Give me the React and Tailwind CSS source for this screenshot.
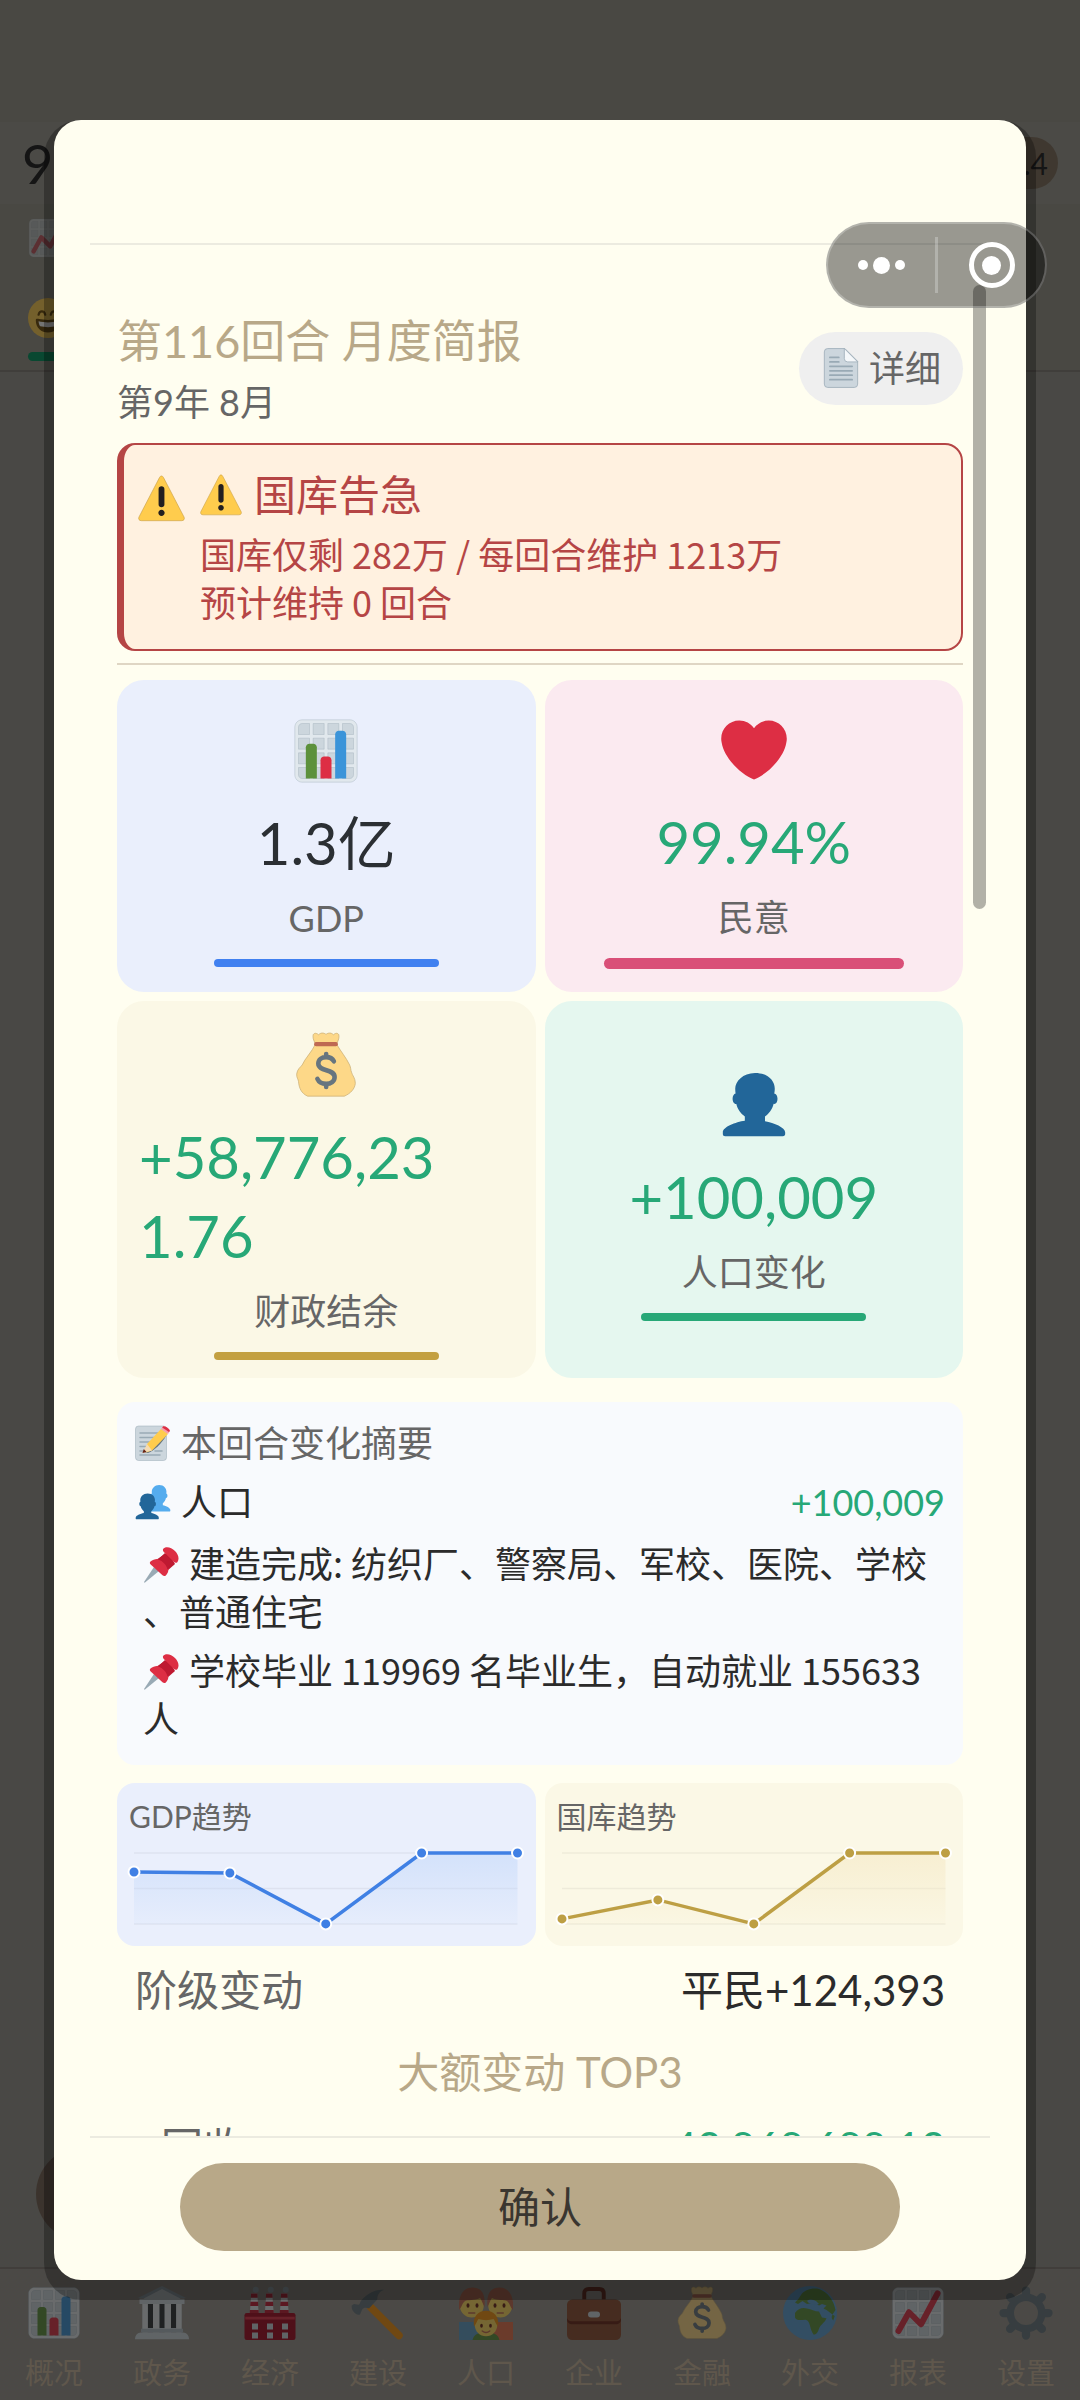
import React from 'react';
import clsx from 'clsx';

// 36x36 emoji drawings
const emojis = {
    barChart: (
        <>
            <path fill="#CCD6DD" d="M31 2H5C3.343 2 2 3.343 2 5v26c0 1.657 1.343 3 3 3h26c1.657 0 3-1.343 3-3V5c0-1.657-1.343-3-3-3z" />
            <path fill="#E1E8ED" stroke="#99AAB5" strokeWidth=".2" d="M31 1H5C2.791 1 1 2.791 1 5v26c0 2.209 1.791 4 4 4h26c2.209 0 4-1.791 4-4V5c0-2.209-1.791-4-4-4zm0 2c1.103 0 2 .897 2 2v4h-6V3h4zm-4 16h6v6h-6v-6zm0-2v-6h6v6h-6zM25 3v6h-6V3h6zm-6 8h6v6h-6v-6zm0 8h6v6h-6v-6zM17 3v6h-6V3h6zm-6 8h6v6h-6v-6zm0 8h6v6h-6v-6zM3 5c0-1.103.897-2 2-2h4v6H3V5zm0 6h6v6H3v-6zm0 8h6v6H3v-6zm2 14c-1.103 0-2-.897-2-2v-4h6v6H5zm6 0v-6h6v6h-6zm8 0v-6h6v6h-6zm12 0h-4v-6h6v4c0 1.103-.897 2-2 2z" />
            <path fill="#5C913B" d="M13 33H7V16c0-1.104.896-2 2-2h2c1.104 0 2 .896 2 2v17z" />
            <path fill="#3B94D9" d="M29 33h-6V9c0-1.104.896-2 2-2h2c1.104 0 2 .896 2 2v24z" />
            <path fill="#DD2E44" d="M21 33h-6V23c0-1.104.896-2 2-2h2c1.104 0 2 .896 2 2v10z" />
        </>
    ),
    trendUp: (
        <>
            <path fill="#CCD6DD" d="M31 2H5C3.343 2 2 3.343 2 5v26c0 1.657 1.343 3 3 3h26c1.657 0 3-1.343 3-3V5c0-1.657-1.343-3-3-3z" />
            <path fill="#E1E8ED" stroke="#99AAB5" strokeWidth=".2" d="M31 1H5C2.791 1 1 2.791 1 5v26c0 2.209 1.791 4 4 4h26c2.209 0 4-1.791 4-4V5c0-2.209-1.791-4-4-4zm0 2c1.103 0 2 .897 2 2v4h-6V3h4zm-4 16h6v6h-6v-6zm0-2v-6h6v6h-6zM25 3v6h-6V3h6zm-6 8h6v6h-6v-6zm0 8h6v6h-6v-6zM17 3v6h-6V3h6zm-6 8h6v6h-6v-6zm0 8h6v6h-6v-6zM3 5c0-1.103.897-2 2-2h4v6H3V5zm0 6h6v6H3v-6zm0 8h6v6H3v-6zm2 14c-1.103 0-2-.897-2-2v-4h6v6H5zm6 0v-6h6v6h-6zm8 0v-6h6v6h-6zm12 0h-4v-6h6v4c0 1.103-.897 2-2 2z" />
            <path fill="none" stroke="#DD2E44" strokeWidth="4" strokeLinecap="round" strokeLinejoin="round" d="M5 30l7-12.500 8 8L31 5" />
        </>
    ),
    heart: (
        <path fill="#DD2E44" d="M35.885 11.833c0-5.45-4.418-9.868-9.867-9.868-3.308 0-6.227 1.633-8.018 4.129-1.791-2.496-4.71-4.129-8.017-4.129-5.45 0-9.868 4.417-9.868 9.868 0 .772.098 1.52.266 2.241C1.751 22.587 11.216 31.568 18 34.034c6.783-2.466 16.249-11.447 17.617-19.959.17-.721.268-1.469.268-2.242z" />
    ),
    warning: (
        <>
            <path fill="#FFCC4D" stroke="#C9A24A" strokeWidth=".5" d="M2.653 35C.811 35-.001 33.662.847 32.027L16.456 1.972c.849-1.635 2.238-1.635 3.087 0l15.609 30.056c.85 1.634.037 2.972-1.805 2.972H2.653z" />
            <path fill="#231F20" d="M15.583 28.953c0-1.333 1.085-2.418 2.419-2.418 1.333 0 2.418 1.085 2.418 2.418 0 1.334-1.086 2.419-2.418 2.419-1.334 0-2.419-1.085-2.419-2.419zm.186-18.293c0-1.302.961-2.108 2.232-2.108 1.241 0 2.233.837 2.233 2.108v11.938c0 1.271-.992 2.108-2.233 2.108-1.271 0-2.232-.807-2.232-2.108V10.66z" />
        </>
    ),
    moneyBag: (
        <>
            <path fill="#FDD888" stroke="#C9AE74" strokeWidth=".4" d="M31.900 21.900c-.5-1.300-.3-2.400-1-3.900C29 14 26 10.500 24 7H12c-1.500 3.500-5.500 7.500-7 11-.7 1-2.800 2.300-3 5-.1 2 .9 2.700 1 4 .3 3.500 1.500 6.500 5 8h20c3.500-1.500 5.700-4 6-7 0-3-1.600-4.100-2.100-6.100z" />
            <path fill="#FDD888" stroke="#C9AE74" strokeWidth=".4" d="M12 6c-.8-1.500-1.300-3-1-4.500.8-1.300 2-.8 3 0C15 .3 16.800.3 18 1.300 19.200.3 21 .3 22 1.500c1-.8 2.200-1.300 3 0 .3 1.500-.2 3-1 4.500z" />
            <rect x="11.500" y="5.500" width="13" height="2.300" rx="1.100" fill="#BF6952" />
            <path fill="none" stroke="#67757F" strokeWidth="2.500" strokeLinecap="round" d="M22.300 16c-.8-1.600-2.400-2.300-4.200-2.300-2.300 0-4.300 1.200-4.300 3.500 0 4.600 8.900 2.700 8.900 7.400 0 2.400-2.100 3.700-4.600 3.700-2.200 0-4-.9-4.800-2.700M18.100 12v1.500M18.100 28.500v1.500" />
        </>
    ),
    person: (
        <path fill="#226699" d="M24 26.799v-2.566c2-1.348 4.08-3.779 4.703-6.896.186.103.206.17.413.17.991 0 1.709-1.287 1.709-2.873 0-1.562-.823-2.827-1.794-2.865.187-.674.293-1.577.293-2.735C29.324 5.168 26 .527 18.541.527c-6.629 0-10.777 4.641-10.777 8.507 0 1.123.069 2.043.188 2.755-.911.137-1.629 1.352-1.629 2.845 0 1.587.804 2.873 1.796 2.873.206 0 .025-.067.209-.17C8.952 20.453 11 22.885 13 24.232v2.414c-5 .645-12 3.437-12 6.23v1.061C1 35 2.076 35 3.137 35h29.725C33.924 35 35 35 35 33.938v-1.061c0-2.615-6-5.225-11-6.078z" />
    ),
    people: (
        <>
            <path fill="#55ACEE" transform="translate(11.500 .5) scale(.68 .77)" d="M24 26.799v-2.566c2-1.348 4.08-3.779 4.703-6.896.186.103.206.17.413.17.991 0 1.709-1.287 1.709-2.873 0-1.562-.823-2.827-1.794-2.865.187-.674.293-1.577.293-2.735C29.324 5.168 26 .527 18.541.527c-6.629 0-10.777 4.641-10.777 8.507 0 1.123.069 2.043.188 2.755-.911.137-1.629 1.352-1.629 2.845 0 1.587.804 2.873 1.796 2.873.206 0 .025-.067.209-.17C8.952 20.453 11 22.885 13 24.232v2.414c-5 .645-12 3.437-12 6.23v1.061C1 35 2.076 35 3.137 35h29.725C33.924 35 35 35 35 33.938v-1.061c0-2.615-6-5.225-11-6.078z" />
            <path fill="#226699" transform="translate(0 9) scale(.68 .75)" d="M24 26.799v-2.566c2-1.348 4.08-3.779 4.703-6.896.186.103.206.17.413.17.991 0 1.709-1.287 1.709-2.873 0-1.562-.823-2.827-1.794-2.865.187-.674.293-1.577.293-2.735C29.324 5.168 26 .527 18.541.527c-6.629 0-10.777 4.641-10.777 8.507 0 1.123.069 2.043.188 2.755-.911.137-1.629 1.352-1.629 2.845 0 1.587.804 2.873 1.796 2.873.206 0 .025-.067.209-.17C8.952 20.453 11 22.885 13 24.232v2.414c-5 .645-12 3.437-12 6.23v1.061C1 35 2.076 35 3.137 35h29.725C33.924 35 35 35 35 33.938v-1.061c0-2.615-6-5.225-11-6.078z" />
        </>
    ),
    page: (
        <>
            <path fill="#CCD6DD" stroke="#99AAB5" strokeWidth=".7" d="M6 .5h15.500L33 12v20.500a3 3 0 0 1-3 3H6a3 3 0 0 1-3-3v-29a3 3 0 0 1 3-3z" />
            <path fill="#F5F8FA" stroke="#99AAB5" strokeWidth=".7" d="M21 .5L33 12.500h-9a3 3 0 0 1-3-3z" />
            <path stroke="#99AAB5" strokeWidth="1.600" strokeLinecap="round" d="M8 8.500h8M8 12.500h8M8 16.500h20M8 20.500h20M8 24.500h20M8 28.500h20" />
        </>
    ),
    memo: (
        <>
            <rect x=".5" y="1" width="31" height="34.500" rx="3" fill="#CCD6DD" stroke="#99AAB5" strokeWidth=".5" />
            <path stroke="#99AAB5" strokeWidth="1.500" strokeLinecap="round" d="M5 8h18M5 12.500h15M5 17h12M5 21.500h10M5 26h4M20 26h7M5 30h20" />
            <path fill="#67757F" d="M9 27l4 1c6-2 14-10 18-17l-2-2z" />
            <path fill="#FFCC4D" d="M12 19L26 4l7 5-16 16.500-6 2z" />
            <path fill="#F99FA8" d="M26 4l2-2.500c1.300-1.300 7 2.200 6.800 4.500L33 9z" />
            <path fill="#DD2E44" d="M28 1.500c1.300-1.300 7 2.200 6.800 4.500l-.8 1L27.200 2.500z" />
            <path fill="#F4DBB4" d="M12 19l5 6.500L7.500 28z" />
            <path fill="#662113" d="M7.500 28l1.300-4 2.700 3z" />
        </>
    ),
    pushpin: (
        <>
            <path fill="#99AAB5" d="M11 20l5 4L2 35.500c-.6.4-1.200-.1-.8-.8z" />
            <path fill="#BE1931" d="M13 13l12-8 7 12-8 7z" />
            <path fill="#DD2E44" d="M7.500 14.500c4-3.300 10-3.500 14.500 1 4.300 4.300 4.500 9.500.8 13-1 .8-2.300.6-3.300-.2L7.700 17.500c-1-1-1.200-2.200-.2-3z" />
            <path fill="#BE1931" d="M15 12.500l7-6.500 8.500 9.500-6 7c-1-4.500-4.500-8.500-9.500-10z" />
            <path fill="#DD2E44" d="M20.500 1.500c3-2.500 8-1 11.500 2.500s4.500 8 2.500 11c-1 1.200-2.500 1-3.500 0L20.800 5c-1-1-1.300-2.500-.3-3.500z" />
        </>
    ),
    grin: (
        <>
            <circle cx="18" cy="18" r="18" fill="#FFCC4D" />
            <path fill="#664500" d="M7 20c0-1.200 1-1.500 3-1 5 1 11 1 16 0 2-.5 3-.2 3 1 0 7-5 11-11 11S7 27 7 20z" />
            <path fill="#fff" d="M9.500 21c5 1.300 12 1.300 17 0-.2 2.500-.7 3.500-1.500 4.500-4 1-10 1-14 0-.8-1-1.300-2-1.500-4.500z" />
            <path fill="none" stroke="#664500" strokeWidth="2" strokeLinecap="round" d="M9.500 15c1-4 5-4 6 0M20.500 15c1-4 5-4 6 0" />
        </>
    ),
    bank: (
        <>
            <path fill="#CCD6DD" d="M0 35.500C0 33 1.500 31 4 31h28c2.500 0 4 2 4 4.500z" />
            <path fill="#99AAB5" d="M18 0l16 8H2z" />
            <path fill="#CCD6DD" d="M18 2l13.500 7h-27zM3 8.500h30V12H3zM5 12h26v19H5z" />
            <path fill="#292F33" d="M8.500 12h3.500v16H8.500zM16.200 12h3.600v16h-3.600zM24 12h3.500v16H24z" />
            <path fill="#E1E8ED" d="M5 12h3.500v19H5zM12 12h4.200v19H12zM19.800 12H24v19h-4.200zM27.500 12H31v19h-3.500z" />
            <path fill="#B0BDC6" d="M4 28.500h28V31H4z" />
        </>
    ),
    factory: (
        <>
            <g fill="#99AAB5">
                <circle cx="8.500" cy="2.500" r="2" />
                <circle cx="18.500" cy="2.500" r="2" />
                <circle cx="28.500" cy="2.500" r="2" />
            </g>
            <path fill="#E1E8ED" d="M5.500 5h4l1 14h-6zM15.500 5h4l1 14h-6zM25.500 5h4l1 14h-6z" />
            <path fill="#BE1931" d="M5.400 5h4.200l.2 2.800H5.200zM5 10.500h5l.2 2.800H4.800zM4.600 16h5.800l.2 3H4.400zM15.400 5h4.200l.2 2.800h-4.600zM15 10.500h5l.2 2.800h-5.400zM14.600 16h5.800l.2 3h-6.200zM25.400 5h4.200l.2 2.800h-4.600zM25 10.500h5l.2 2.800h-5.400zM24.600 16h5.800l.2 3h-6.200z" />
            <rect x="1" y="18" width="34" height="18" rx="1.500" fill="#A0041E" />
            <path fill="#DD2E44" d="M1.500 20.500h33v1.800h-33z" />
            <path fill="#CCD6DD" d="M6 25h4v4H6zM16 25h4v4h-4zM26 25h4v4h-4zM6 31h4v4H6zM16 31h4v4h-4zM26 31h4v4h-4z" />
        </>
    ),
    hammer: (
        <>
            <path stroke="#F4900C" strokeWidth="5" strokeLinecap="round" d="M13 14l19 19" />
            <path fill="#66757F" d="M2 12l3 .5c1 0 1-2 2-3C11 5 16 2 22 2.500c-3 1-4.500 3.500-4.500 6.500L12 15c-2-1-4-.5-4.500.5L6 19c-3 1-6-3-5.500-6z" />
        </>
    ),
    family: (
        <>
            <path fill="#5D9CC6" d="M0 24h18v12H0z" />
            <path fill="#E8704A" d="M18 24h18v12H18z" />
            <circle cx="8.500" cy="13" r="8" fill="#FFDC5D" />
            <circle cx="27.500" cy="13" r="8" fill="#FFDC5D" />
            <path fill="#C1694F" d="M0 16C-1 5 4 1 9 1s9 3 8 13c-1.500-3-2-5-3-6-4 2-8 1-10 2-2 1.500-2 4-4 6zM36 16c1-11-4-15-9-15s-9 3-8 13c1.500-3 2-5 3-6 4 2 8 1 10 2 2 1.500 2 4 4 6z" />
            <g fill="#662113">
                <ellipse cx="6" cy="13" rx="1" ry="1.500" />
                <ellipse cx="12" cy="13" rx="1" ry="1.500" />
                <ellipse cx="24" cy="13" rx="1" ry="1.500" />
                <ellipse cx="30" cy="13" rx="1" ry="1.500" />
            </g>
            <path fill="#5C913B" d="M9 36c1-4 4-5 9-5s8 1 9 5z" />
            <circle cx="18" cy="26" r="7.500" fill="#FFDC5D" />
            <path fill="#F4900C" d="M10 27c-1-7 3-10.500 8-10.500S27 20 26 27c-1.500-1.500-2-4-3-5-3 1-7 1-10 0-1 1-1.500 3.500-3 5z" />
            <ellipse cx="15" cy="26.500" rx=".9" ry="1.400" fill="#662113" />
            <ellipse cx="21" cy="26.500" rx=".9" ry="1.400" fill="#662113" />
            <path fill="none" stroke="#C1694F" strokeLinecap="round" d="M15.500 30c1.500 1.200 3.500 1.200 5 0M6.500 18h4M25.500 18h4" />
        </>
    ),
    briefcase: (
        <>
            <path fill="none" stroke="#662113" strokeWidth="2.600" d="M11.500 9V5c0-2 1-3 3-3h7c2 0 3 1 3 3v4" />
            <rect x="0" y="9" width="36" height="27" rx="3.500" fill="#8A4B2E" />
            <path fill="#662113" d="M0 22c0 2.500 1.500 3.500 3.500 3.500h29c2 0 3.500-1 3.500-3.500v-2H0z" />
            <path fill="#8A4B2E" d="M0 12h36v9c0 1.500-1.500 2.500-3 2.500H3c-1.500 0-3-1-3-2.500z" />
            <rect x="14" y="17" width="8" height="4" rx="2" fill="#CCD6DD" />
        </>
    ),
    globe: (
        <>
            <circle cx="18" cy="18" r="18" fill="#5B9FD6" />
            <path fill="#5C913B" d="M12 6c2-3 7-5 12-4 6 2 10 8 11 14l-2 3-4-3-2-1 2-2-3-1-2 1-3-2-5 1-3-2-3 2-2-1 2-2z" />
            <path fill="#5C913B" d="M8 18c2-3 5-4 8-3 3 .5 5 2 8 2l2 4 3 .5c-1 3-4 4-5 7-.5 2-2 4-3.500 4-1.500-2-2-4-2.500-6s-1-3.500-3-4c-3 0-6 1-7-1.500zM33 19l1.500 1-1 3c-1-1-1.500-2-.5-4z" />
            <path fill="#5B9FD6" d="M16 10c2-1.500 4-1 6 0l2 2c-3 1-6 .5-8-2z" />
        </>
    ),
    gear: (
        <g fill="none" stroke="#66757F">
            <circle cx="18" cy="18" r="10.500" strokeWidth="5" />
            <path strokeWidth="5.500" strokeLinecap="round" d="M18 5V3M18 31v2M5 18H3M31 18h2M8.800 8.800L7.400 7.400M27.200 8.800l1.400-1.400M8.800 27.200l-1.400 1.400M27.200 27.200l1.400 1.400" />
        </g>
    ),
};

const Emoji = ({ name, className = '' }) => (
    <svg viewBox="0 0 36 36" aria-hidden="true" className={clsx('shrink-0', className)}>
        {emojis[name]}
    </svg>
);

const tabs = [
    { icon: 'barChart', label: '概况' },
    { icon: 'bank', label: '政务' },
    { icon: 'factory', label: '经济' },
    { icon: 'hammer', label: '建设' },
    { icon: 'family', label: '人口' },
    { icon: 'briefcase', label: '企业' },
    { icon: 'moneyBag', label: '金融' },
    { icon: 'globe', label: '外交' },
    { icon: 'trendUp', label: '报表' },
    { icon: 'gear', label: '设置' },
];

const stats = [
    { icon: 'barChart', value: '1.3亿', label: 'GDP', card: 'bg-[#eaeffc]', text: 'text-[#2b2f33]', bar: 'w-3/5 h-2 bg-[#4080f0]' },
    { icon: 'heart', value: '99.94%', label: '民意', card: 'bg-[#fbeaf0]', text: 'text-[#27a877]', bar: 'w-4/5 h-[11px] bg-[#d94f78]' },
    { icon: 'moneyBag', value: '+58,776,23\n1.76', label: '财政结余', card: 'bg-[#fbf8e6]', text: 'text-[#27a877]', bar: 'w-3/5 h-2 bg-[#c3a040]' },
    { icon: 'person', value: '+100,009', label: '人口变化', card: 'bg-[#e5f7ef]', text: 'text-[#27a877]', bar: 'w-3/5 h-2 bg-[#27a877]' },
];

const notes = [
    '建造完成: 纺织厂、警察局、军校、医院、学校、普通住宅',
    '学校毕业 119969 名毕业生，自动就业 155633 人',
];

const trends = [
    { id: 'gdp', label: 'GDP趋势', color: '#4080e4', fill: '#c4d9fa', card: 'bg-[#eaeffc]', points: [35, 36, 87, 16, 16] },
    { id: 'treasury', label: '国库趋势', color: '#bd9f44', fill: '#f5e8c4', card: 'bg-[#fbf8e6]', points: [82, 63, 87, 16, 16] },
];

const StatCard = ({ icon, value, label, card, text, bar }) => (
    <div className={clsx('flex flex-col items-center justify-center min-h-[312px] px-[22px] py-[18px] rounded-[27px]', card)}>
        <div className="flex items-center h-[92px]">
            <Emoji name={icon} className="size-[66px]" />
        </div>
        <div className={clsx('mt-[6px] text-[58px] leading-[79px] whitespace-pre-line', value.includes('\n') && 'w-full', text)}>{value}</div>
        <div className="mt-[11px] text-[36px] leading-[50px] text-[#666]">{label}</div>
        <div className={clsx('mt-4 rounded-full', bar)} />
    </div>
);

const TrendCard = ({ id, label, color, fill, card, points }) => {
    const coords = points.map((y, i) => [17 + i * 96, y]);
    const line = coords.map((c) => c.join(',')).join(' ');

    return (
        <div className={clsx('pt-3 rounded-[18px]', card)}>
            <div className="px-3 text-[30px] leading-[42px] text-[#666]">{label}</div>
            <svg viewBox="0 0 419 109" className="block w-full h-auto">
                <defs>
                    <linearGradient id={id} x1="0" y1="0" x2="0" y2="1">
                        <stop offset="0" stopColor={fill} stopOpacity=".6" />
                        <stop offset="1" stopColor={fill} stopOpacity=".1" />
                    </linearGradient>
                </defs>
                <path stroke="#000" strokeOpacity=".05" strokeWidth="1.500" d="M17 16h384M17 51.500h384M17 87h384" />
                <polygon fill={`url(#${id})`} points={`17,87 ${line} 401,87`} />
                <polyline fill="none" stroke={color} strokeWidth="3.500" points={line} />
                {coords.map(([x, y]) => (
                    <circle key={x} cx={x} cy={y} r="5.500" fill={color} stroke="#fff" strokeWidth="2" />
                ))}
            </svg>
        </div>
    );
};

const App = () => (
    <div className="relative flex flex-col h-screen overflow-hidden bg-[#93908a] text-[#2b2b2b] font-['Lato','Noto_Sans_CJK_SC',sans-serif]">
        <header className="border-b-2 border-[#817c76] pt-[122px] bg-[#929087]">
            <div className="flex items-center justify-between h-[82px] pl-[22px] pr-[22px] bg-[#96948c]">
                <span className="text-[54px]">9</span>
                <span className="px-[10px] rounded-full bg-[#7f7161] text-[30px] leading-[52px]">124.4</span>
            </div>
            <div className="flex flex-col gap-10 pt-[14px] pb-[9px] pl-7">
                <Emoji name="trendUp" className="size-10 opacity-50" />
                <div className="flex flex-col gap-[14px]">
                    <Emoji name="grin" className="size-10 opacity-80" />
                    <div className="w-[160px] h-[9px] rounded-full bg-[#129062]" />
                </div>
            </div>
        </header>

        <main className="flex-1 flex items-end pl-9 pr-20 pb-[26px]">
            <div className="w-full h-[94px] rounded-full bg-[#76675a]" />
        </main>

        <nav className="flex border-t-2 border-[#827d76] bg-[#96938c] pt-[17px] pb-[5px]">
            {tabs.map((tab) => (
                <a key={tab.label} href="#" className="flex-1 flex flex-col items-center gap-[11px] text-[29px] leading-[44px] text-[#bfae98]">
                    <Emoji name={tab.icon} className="size-[54px] opacity-80" />
                    {tab.label}
                </a>
            ))}
        </nav>

        <div className="absolute inset-0 flex items-center justify-center bg-black/50">
            <section
                role="dialog"
                aria-labelledby="report-title"
                className="flex flex-col w-[90%] h-[90%] px-9 rounded-[27px] bg-[#fffef0] shadow-[0_10px_0_10px_rgba(0,0,0,0.28)]"
            >
                <div className="h-[125px] shrink-0 border-b-2 border-[#ecebe0]" />

                <div className="relative flex-1 min-h-0 overflow-hidden">
                    <div className="flex flex-col px-[27px] pt-16">
                        <div className="flex items-center justify-between">
                            <div>
                                <h1 id="report-title" className="text-[45px] leading-[64px] text-[#b8a888]">第116回合 月度简报</h1>
                                <p className="mt-1 text-[36px] leading-[50px] text-[#666]">第9年 8月</p>
                            </div>
                            <button className="flex items-center gap-2 px-[22px] rounded-full bg-[#efefef] text-[36px] leading-[73px] text-[#666]">
                                <Emoji name="page" className="size-10" />
                                详细
                            </button>
                        </div>

                        <div className="flex gap-[15px] mt-4 pt-5 pb-6 pl-[14px] pr-4 rounded-[18px] border-2 border-l-[7px] border-[#b54545] bg-[#fff1e0] text-[#b54545]">
                            <Emoji name="warning" className="size-[47px] mt-[10px]" />
                            <div>
                                <h2 className="flex items-center gap-3 text-[42px] leading-[60px]">
                                    <Emoji name="warning" className="size-[42px]" />
                                    国库告急
                                </h2>
                                <p className="mt-1 font-['Noto_Sans_CJK_SC',sans-serif] text-[36px] leading-[48px]">
                                    国库仅剩 282万 / 每回合维护 1213万
                                    <br />
                                    预计维持 0 回合
                                </p>
                            </div>
                        </div>

                        <hr className="mt-3 mb-[15px] border-t-2 border-[#dfd6c4]" />

                        <div className="grid grid-cols-2 gap-[9px]">
                            {stats.map((stat) => (
                                <StatCard key={stat.label} {...stat} />
                            ))}
                        </div>

                        <div className="mt-6 px-[18px] pt-4 pb-6 rounded-[18px] bg-[#f8fafd] text-[36px]">
                            <div className="flex items-center gap-[10px] leading-[50px] text-[#666]">
                                <Emoji name="memo" className="size-9" />
                                本回合变化摘要
                            </div>
                            <div className="flex items-center gap-[10px] mt-[9px] leading-[50px]">
                                <Emoji name="people" className="size-9" />
                                人口
                                <span className="ml-auto text-[#27a877]">+100,009</span>
                            </div>
                            {notes.map((note) => (
                                <p key={note} className="mt-[11px] px-2 font-['Noto_Sans_CJK_SC',sans-serif] leading-[48px] [line-break:anywhere]">
                                    <Emoji name="pushpin" className="inline-block size-9 mr-[10px] align-[-5px]" />
                                    {note}
                                </p>
                            ))}
                        </div>

                        <div className="grid grid-cols-2 gap-[9px] mt-[18px]">
                            {trends.map((trend) => (
                                <TrendCard key={trend.id} {...trend} />
                            ))}
                        </div>

                        <div className="flex justify-between mt-[14px] px-[18px] text-[42px] leading-[60px]">
                            <span className="text-[#666]">阶级变动</span>
                            <span>平民+124,393</span>
                        </div>
                        <h2 className="mt-[22px] text-center text-[42px] leading-[60px] text-[#b8a888]">大额变动 TOP3</h2>
                        <div className="flex justify-between mt-[15px] pl-11 pr-[18px] text-[42px] leading-[60px]">
                            <span className="text-[#666]">回收</span>
                            <span className="text-[#27a877]">43,868,688.13</span>
                        </div>
                    </div>
                    <div className="absolute top-10 right-1 w-[13px] h-[33%] rounded-full bg-black/30" />
                </div>

                <div className="flex justify-center pt-[25px] pb-[29px] border-t-2 border-[#ecebe0]">
                    <button className="w-4/5 rounded-full bg-[#b8a888] text-[42px] leading-[88px] text-[#3a3630]">确认</button>
                </div>
            </section>
        </div>

        <div className="absolute top-[222px] right-[33px] flex items-center w-[221px] h-[86px] rounded-full border-2 border-white/25 bg-black/40">
            <button aria-label="更多" className="flex-1 flex items-center justify-center gap-[5px]">
                <span className="size-[10px] rounded-full bg-white" />
                <span className="size-[17px] rounded-full bg-white" />
                <span className="size-[10px] rounded-full bg-white" />
            </button>
            <span className="w-[3px] h-14 bg-white/25" />
            <button aria-label="关闭" className="flex-1 flex items-center justify-center">
                <span className="flex items-center justify-center size-[46px] rounded-full border-[5px] border-white">
                    <span className="size-[19px] rounded-full bg-white" />
                </span>
            </button>
        </div>
    </div>
);

export default App;
